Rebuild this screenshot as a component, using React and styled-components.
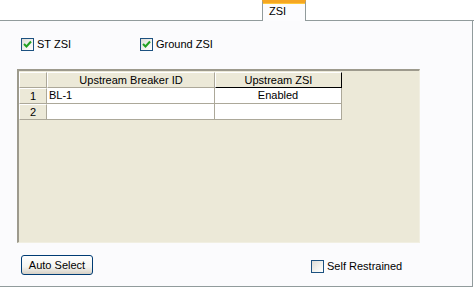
import React from 'react';
import styled, { createGlobalStyle } from 'styled-components';

const Global = createGlobalStyle`
  html, body {
    margin: 0;
    padding: 0;
    background: #ffffff;
  }
  * {
    box-sizing: border-box;
  }
`;

const Window = styled.div`
  width: 474px;
  height: 288px;
  background: #ffffff;
  font-family: "Liberation Sans", Arial, sans-serif;
  font-size: 11px;
  color: #000000;
  display: flex;
  flex-direction: column;
`;

const TabStrip = styled.div`
  height: 21px;
  display: flex;
  align-items: flex-end;
`;

const TabLine = styled.div`
  height: 1px;
  background: #919b9c;
  width: ${(p) => p.width}px;
`;

const Tab = styled.div`
  width: 44px;
  height: 21px;
  background: #fcfcfe;
  border-left: 1px solid #919b9c;
  border-right: 1px solid #919b9c;
  border-top: 3px solid #f5a623;
  box-shadow: inset 0 1px 0 #ffc83c;
  padding-left: 6px;
  padding-top: 1px;
  line-height: 14px;
`;

const Panel = styled.div`
  width: 473px;
  height: 266px;
  background: #fbfbfd;
  border-right: 1px solid #919b9c;
  border-bottom: 1px solid #919b9c;
  display: flex;
  flex-direction: column;
`;

const CheckRow = styled.div`
  display: flex;
  margin-top: 17px;
  padding-left: 21px;
  height: 13px;
`;

const CheckItem = styled.label`
  display: flex;
  align-items: center;
  gap: 3px;
  width: ${(p) => (p.width ? `${p.width}px` : 'auto')};
  height: 13px;
  line-height: 13px;
`;

const Box = styled.span`
  width: 13px;
  height: 13px;
  border: 1px solid #1c5180;
  background: linear-gradient(135deg, #dcdcd7 0%, #f4f4f0 60%, #ffffff 100%);
  display: flex;
  align-items: center;
  justify-content: center;
  flex-shrink: 0;
`;

const GridFrame = styled.div`
  margin-top: 18px;
  margin-left: 17px;
  width: 403px;
  height: 174px;
  background: #ece9d8;
  border-top: 2px solid #9d9a8d;
  border-left: 2px solid #9d9a8d;
  border-right: 1px solid #f1efe2;
  border-bottom: 1px solid #f1efe2;
  padding-top: 1px;
`;

const Table = styled.div`
  display: grid;
  grid-template-columns: 28px 168px 127px;
  grid-auto-rows: 16px;
  width: 323px;
`;

const HeadCell = styled.div`
  background: #ece9d8;
  border-top: 1px solid #ffffff;
  border-left: 1px solid #ffffff;
  border-right: 1px solid ${(p) => (p.last ? '#000000' : '#aca899')};
  border-bottom: 1px solid ${(p) => (p.last ? '#000000' : '#aca899')};
  text-align: center;
  line-height: 14px;
  overflow: hidden;
  white-space: nowrap;
`;

const Cell = styled.div`
  background: #ffffff;
  border-right: 1px solid #aca899;
  border-bottom: 1px solid #aca899;
  text-align: ${(p) => p.align || 'left'};
  padding-left: ${(p) => (p.align === 'center' ? 0 : 2)}px;
  line-height: 15px;
  white-space: nowrap;
  overflow: hidden;
`;

const Footer = styled.div`
  margin-top: 12px;
  display: flex;
  align-items: flex-start;
`;

const Button = styled.button`
  margin-left: 21px;
  width: 72px;
  height: 20px;
  border: 1px solid #003c74;
  border-radius: 3px;
  background: linear-gradient(180deg, #ffffff 0%, #f4f4f0 60%, #d6d0c5 100%);
  font-family: inherit;
  font-size: 11px;
  color: #000000;
  padding: 0;
`;

const FooterCheck = styled.div`
  margin-left: 218px;
  margin-top: 5px;
`;

function Check({ checked }) {
  return (
    <Box>
      {checked && (
        <svg width="9" height="9" viewBox="0 0 9 9">
          <path d="M1 4 L3.5 6.5 L8 1.5" stroke="#21a121" strokeWidth="2" fill="none" />
        </svg>
      )}
    </Box>
  );
}

const rows = [
  { id: 1, breaker: 'BL-1', zsi: 'Enabled' },
  { id: 2, breaker: '', zsi: '' },
];

export default function App() {
  return (
    <>
      <Global />
      <Window>
        <TabStrip>
          <TabLine width={262} />
          <Tab>ZSI</Tab>
          <TabLine width={168} />
        </TabStrip>
        <Panel>
          <CheckRow>
            <CheckItem width={119}>
              <Check checked />
              ST ZSI
            </CheckItem>
            <CheckItem>
              <Check checked />
              Ground ZSI
            </CheckItem>
          </CheckRow>
          <GridFrame>
            <Table>
              <HeadCell />
              <HeadCell>Upstream Breaker ID</HeadCell>
              <HeadCell last>Upstream ZSI</HeadCell>
              {rows.map((r) => (
                <React.Fragment key={r.id}>
                  <HeadCell>{r.id}</HeadCell>
                  <Cell>{r.breaker}</Cell>
                  <Cell align="center">{r.zsi}</Cell>
                </React.Fragment>
              ))}
            </Table>
          </GridFrame>
          <Footer>
            <Button>Auto Select</Button>
            <FooterCheck>
              <CheckItem>
                <Check />
                Self Restrained
              </CheckItem>
            </FooterCheck>
          </Footer>
        </Panel>
      </Window>
    </>
  );
}
